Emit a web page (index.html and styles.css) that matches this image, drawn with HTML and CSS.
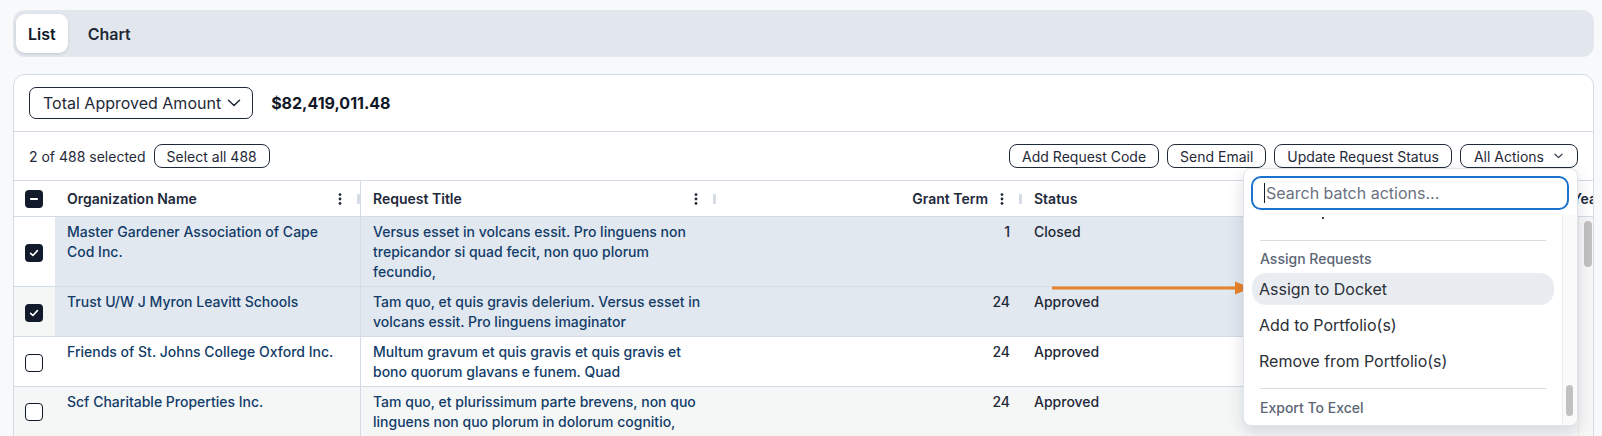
FILE: index.html
```html
<!DOCTYPE html>
<html lang="en">
<head>
<meta charset="utf-8">
<title>Requests</title>
<link rel="stylesheet" href="styles.css">
</head>
<body>
<div class="page">
  <div class="tabs">
    <div class="tab active">List</div>
    <div class="tab">Chart</div>
  </div>

  <div class="card">
    <div class="summary">
      <div class="select">Total Approved Amount
        <svg class="chev" width="14" height="8" viewBox="0 0 14 8"><path d="M1.5 1.2 L7 6.5 L12.5 1.2" fill="none" stroke="#1f2937" stroke-width="1.5" stroke-linecap="round" stroke-linejoin="round"/></svg>
      </div>
      <div class="amount">$82,419,011.48</div>
    </div>

    <div class="toolbar">
      <div class="sel-info">
        <span>2 of 488 selected</span>
        <button class="btn">Select all 488</button>
      </div>
      <div class="actions">
        <button class="btn">Add Request Code</button>
        <button class="btn">Send Email</button>
        <button class="btn">Update Request Status</button>
        <div class="menu-wrap">
          <button class="btn btn-menu">All Actions
            <svg width="9" height="6" viewBox="0 0 9 6"><path d="M1 1.2 L4.5 4.6 L8 1.2" fill="none" stroke="#374151" stroke-width="1.3" stroke-linecap="round" stroke-linejoin="round"/></svg>
          </button>
          <div class="menu">
            <div class="menu-search">
              <div class="search"><span class="caret"></span><span class="ph">Search batch actions...</span></div>
            </div>
            <div class="menu-body">
              <div class="menu-list">
                <div class="ghost"><span class="dot"></span></div>
                <div class="sep"></div>
                <div class="group">Assign Requests</div>
                <div class="item active">Assign to Docket</div>
                <div class="item">Add to Portfolio(s)</div>
                <div class="item">Remove from Portfolio(s)</div>
                <div class="sep last"></div>
                <div class="group">Export To Excel</div>
              </div>
              <div class="menu-track"><div class="menu-thumb"></div></div>
            </div>
          </div>
        </div>
      </div>
    </div>

    <div class="table">
      <div class="row head">
        <div class="hcell c0"><span class="cb on"><svg width="18" height="18" viewBox="0 0 18 18"><rect x="5" y="8" width="8" height="2" rx="0.8" fill="#fff"/></svg></span></div>
        <div class="hcell c1"><span class="hlabel">Organization Name</span><span class="kebab"><svg width="16" height="12" viewBox="0 0 16 12"><circle cx="8" cy="1.6" r="1.4"/><circle cx="8" cy="6" r="1.4"/><circle cx="8" cy="10.4" r="1.4"/></svg></span><span class="rbar"></span></div>
        <div class="hcell c2"><span class="hlabel">Request Title</span><span class="kebab"><svg width="16" height="12" viewBox="0 0 16 12"><circle cx="8" cy="1.6" r="1.4"/><circle cx="8" cy="6" r="1.4"/><circle cx="8" cy="10.4" r="1.4"/></svg></span><span class="rbar"></span></div>
        <div class="hcell c3"><span class="hlabel right">Grant Term</span><span class="kebab"><svg width="16" height="12" viewBox="0 0 16 12"><circle cx="8" cy="1.6" r="1.4"/><circle cx="8" cy="6" r="1.4"/><circle cx="8" cy="10.4" r="1.4"/></svg></span><span class="rbar"></span></div>
        <div class="hcell c4"><span class="hlabel">Status</span><span class="kebab"><svg width="16" height="12" viewBox="0 0 16 12"><circle cx="8" cy="1.6" r="1.4"/><circle cx="8" cy="6" r="1.4"/><circle cx="8" cy="10.4" r="1.4"/></svg></span><span class="rbar"></span></div>
        <div class="hcell c5"><span class="hlabel">Year</span></div>
      </div>

      <div class="row sel">
        <div class="cell c0"><span class="cb on"><svg width="18" height="18" viewBox="0 0 18 18"><path d="M5.6 9.3 L7.9 11.5 L12.4 6.6" fill="none" stroke="#fff" stroke-width="1.6" stroke-linecap="round" stroke-linejoin="round"/></svg></span></div>
        <div class="cell c1 link">Master Gardener Association of Cape Cod Inc.</div>
        <div class="cell c2 link">Versus esset in volcans essit. Pro linguens non trepicandor si quad fecit, non quo plorum fecundio,</div>
        <div class="cell c3">1</div>
        <div class="cell c4">Closed</div>
        <div class="cell c5"></div>
      </div>

      <div class="row sel alt">
        <div class="cell c0"><span class="cb on"><svg width="18" height="18" viewBox="0 0 18 18"><path d="M5.6 9.3 L7.9 11.5 L12.4 6.6" fill="none" stroke="#fff" stroke-width="1.6" stroke-linecap="round" stroke-linejoin="round"/></svg></span></div>
        <div class="cell c1 link">Trust U/W J Myron Leavitt Schools</div>
        <div class="cell c2 link">Tam quo, et quis gravis delerium. Versus esset in volcans essit. Pro linguens imaginator</div>
        <div class="cell c3">24</div>
        <div class="cell c4">Approved</div>
        <div class="cell c5"></div>
      </div>

      <div class="row">
        <div class="cell c0"><span class="cb"></span></div>
        <div class="cell c1 link">Friends of St. Johns College Oxford Inc.</div>
        <div class="cell c2 link">Multum gravum et quis gravis et quis gravis et bono quorum glavans e funem. Quad</div>
        <div class="cell c3">24</div>
        <div class="cell c4">Approved</div>
        <div class="cell c5"></div>
      </div>

      <div class="row alt last">
        <div class="cell c0"><span class="cb"></span></div>
        <div class="cell c1 link">Scf Charitable Properties Inc.</div>
        <div class="cell c2 link">Tam quo, et plurissimum parte brevens, non quo linguens non quo plorum in dolorum cognitio,</div>
        <div class="cell c3">24</div>
        <div class="cell c4">Approved</div>
        <div class="cell c5"></div>
      </div>

      <div class="vscroll"><div class="vthumb"></div></div>
    </div>
  </div>

  <svg class="arrow" width="204" height="14" viewBox="0 0 204 14">
    <line x1="2" y1="7" x2="188" y2="7" stroke="#e8822a" stroke-width="2.8"/>
    <polygon points="185,0.5 201,7 185,13.5" fill="#e8822a"/>
  </svg>
</div>
</body>
</html>
```

FILE: styles.css
```css
* {
  box-sizing: border-box;
}

body {
  margin: 0;
  background: #f8f9fb;
  font-family: Inter, "Noto Sans", "Liberation Sans", sans-serif;
  color: #1f2937;
}

.page {
  position: relative;
  padding: 10px 8px 0 13px;
}

/* Tabs */
.tabs {
  display: flex;
  gap: 8px;
  height: 47px;
  padding: 4px 3px;
  background: #e2e7ed;
  border-radius: 12px;
}

.tab {
  display: flex;
  align-items: center;
  padding: 0 12px;
  border-radius: 9px;
  font-size: 16px;
  font-weight: 600;
  color: #1f2937;
}

.tab.active {
  background: #fff;
  color: #111827;
  box-shadow: 0 1px 3px rgba(15, 23, 42, 0.14);
}

/* Card */
.card {
  margin-top: 17px;
  background: #fff;
  border: 1px solid #d3dbe5;
  border-radius: 12px;
}

.summary {
  display: flex;
  align-items: center;
  gap: 18px;
  padding: 12px 15px;
  border-bottom: 1px solid #d3dbe5;
}

.select {
  display: flex;
  align-items: center;
  gap: 6px;
  height: 32px;
  padding: 0 11px 0 13px;
  border: 1px solid #1f2937;
  border-radius: 7px;
  font-size: 16px;
  color: #1f2937;
}

.amount {
  font-size: 16px;
  font-weight: 700;
  color: #111827;
}

.toolbar {
  display: flex;
  align-items: center;
  justify-content: space-between;
  padding: 12px 15px;
  border-bottom: 1px solid #d3dbe5;
}

.sel-info {
  display: flex;
  align-items: center;
  gap: 8px;
  font-size: 14px;
  color: #1f2937;
}

.actions {
  display: flex;
  align-items: center;
  gap: 8px;
}

.btn {
  display: flex;
  align-items: center;
  height: 24px;
  padding: 0 12px;
  background: #fff;
  border: 1px solid #1f2937;
  border-radius: 8px;
  font-family: inherit;
  font-size: 14px;
  color: #1f2937;
}

.btn-menu {
  gap: 10px;
  padding: 0 14px 0 13px;
}

/* Batch actions menu */
.menu-wrap {
  position: relative;
  z-index: 5;
}

.menu {
  position: absolute;
  top: 100%;
  right: 0;
  width: 335px;
  height: 258px;
  display: flex;
  flex-direction: column;
  background: #fff;
  border: 1px solid #e1e5ea;
  border-radius: 8px;
  box-shadow: 0 6px 16px rgba(15, 23, 42, 0.14);
  overflow: hidden;
}

.menu-search {
  padding: 7px 8px 5px 7px;
}

.search {
  display: flex;
  align-items: center;
  height: 34px;
  padding-left: 11px;
  border: 2px solid #1b73cc;
  border-radius: 10px;
  font-size: 16px;
  color: #6b7280;
}

.caret {
  width: 1px;
  height: 20px;
  margin-right: 1px;
  background: #111827;
}

.menu-body {
  flex: 1;
  display: flex;
  min-height: 0;
}

.menu-list {
  flex: 1;
  padding: 0 8px;
}

.ghost {
  height: 15px;
}

.dot {
  display: block;
  width: 2px;
  height: 2px;
  margin: 2px 0 0 70px;
  background: #374151;
}

.sep {
  height: 1px;
  margin: 8px 8px 8px;
  background: #d7dce2;
}

.sep.last {
  margin-top: 11px;
  margin-bottom: 9px;
}

.group {
  padding-left: 8px;
  margin-bottom: 4px;
  font-size: 14px;
  line-height: 20px;
  font-weight: 500;
  color: #5b6574;
}

.item {
  display: flex;
  align-items: center;
  height: 32px;
  margin-bottom: 4px;
  padding: 0 7px;
  border-radius: 14px;
  font-size: 16px;
  color: #2b2f36;
}

.item.active {
  background: #e9edf2;
}

.menu-track {
  width: 15px;
  padding: 170px 0 0 3px;
  background: #fafafa;
  border-left: 1px solid #ececec;
}

.menu-thumb {
  width: 7px;
  height: 31px;
  border-radius: 4px;
  background: #c1c1c1;
}

/* Table */
.table {
  position: relative;
  min-height: 290px;
  overflow: hidden;
  border-radius: 0 0 12px 12px;
}

.row {
  display: grid;
  grid-template-columns: 41px 306px 355px 306px 538px 200px;
  width: max-content;
  border-bottom: 1px solid #d3dbe5;
  background: #fff;
}

.row.last {
  min-height: 70px;
}

.row.alt {
  background: #f5f7f7;
}

.row.sel .cell:not(.c0) {
  background: #e2e8f0;
}

.row.head {
  height: 36px;
  background: #fff;
}

.cell {
  padding: 5px 12px 4px;
  font-size: 14px;
  line-height: 20px;
  font-weight: 500;
  color: #1f2937;
}

.link {
  color: #123c68;
}

.c0 {
  display: flex;
  align-items: center;
  padding: 2px 0 0 11px;
}

.row.last .c0 {
  align-items: flex-start;
  padding-top: 16px;
}

.c1 {
  padding-right: 19px;
  border-right: 1px solid #d3dbe5;
}

.c2 {
  padding-right: 10px;
}

.c3 {
  text-align: right;
  padding-right: 12px;
}

.hcell {
  display: flex;
  align-items: center;
  padding: 0 0 0 12px;
  font-size: 14px;
  font-weight: 600;
  color: #1e293b;
}

.hcell.c0 {
  padding: 0 0 0 11px;
}

.hlabel {
  flex: 1;
  white-space: nowrap;
}

.hlabel.right {
  text-align: right;
  margin-right: 6px;
}

.kebab {
  display: flex;
  width: 16px;
  margin-right: 9px;
  fill: #1f2937;
}

.rbar {
  width: 3px;
  height: 10px;
  border-radius: 1px;
  background: #d5dce5;
}

.cb {
  display: block;
  width: 18px;
  height: 18px;
  border: 1.5px solid #111827;
  border-radius: 4px;
  background: #fff;
}

.cb.on {
  border: none;
  background: #111b2b;
}

.cb svg {
  display: block;
}

.vscroll {
  position: absolute;
  top: 36px;
  right: 0;
  bottom: 0;
  width: 15px;
  padding: 4px 0 0 5px;
  background: #f7f7f7;
  border-left: 1px solid #ececec;
}

.vthumb {
  width: 8px;
  height: 46px;
  border-radius: 4px;
  background: #c1c1c1;
}

/* Annotation arrow */
.arrow {
  position: absolute;
  left: 1050px;
  top: 281px;
}
```
